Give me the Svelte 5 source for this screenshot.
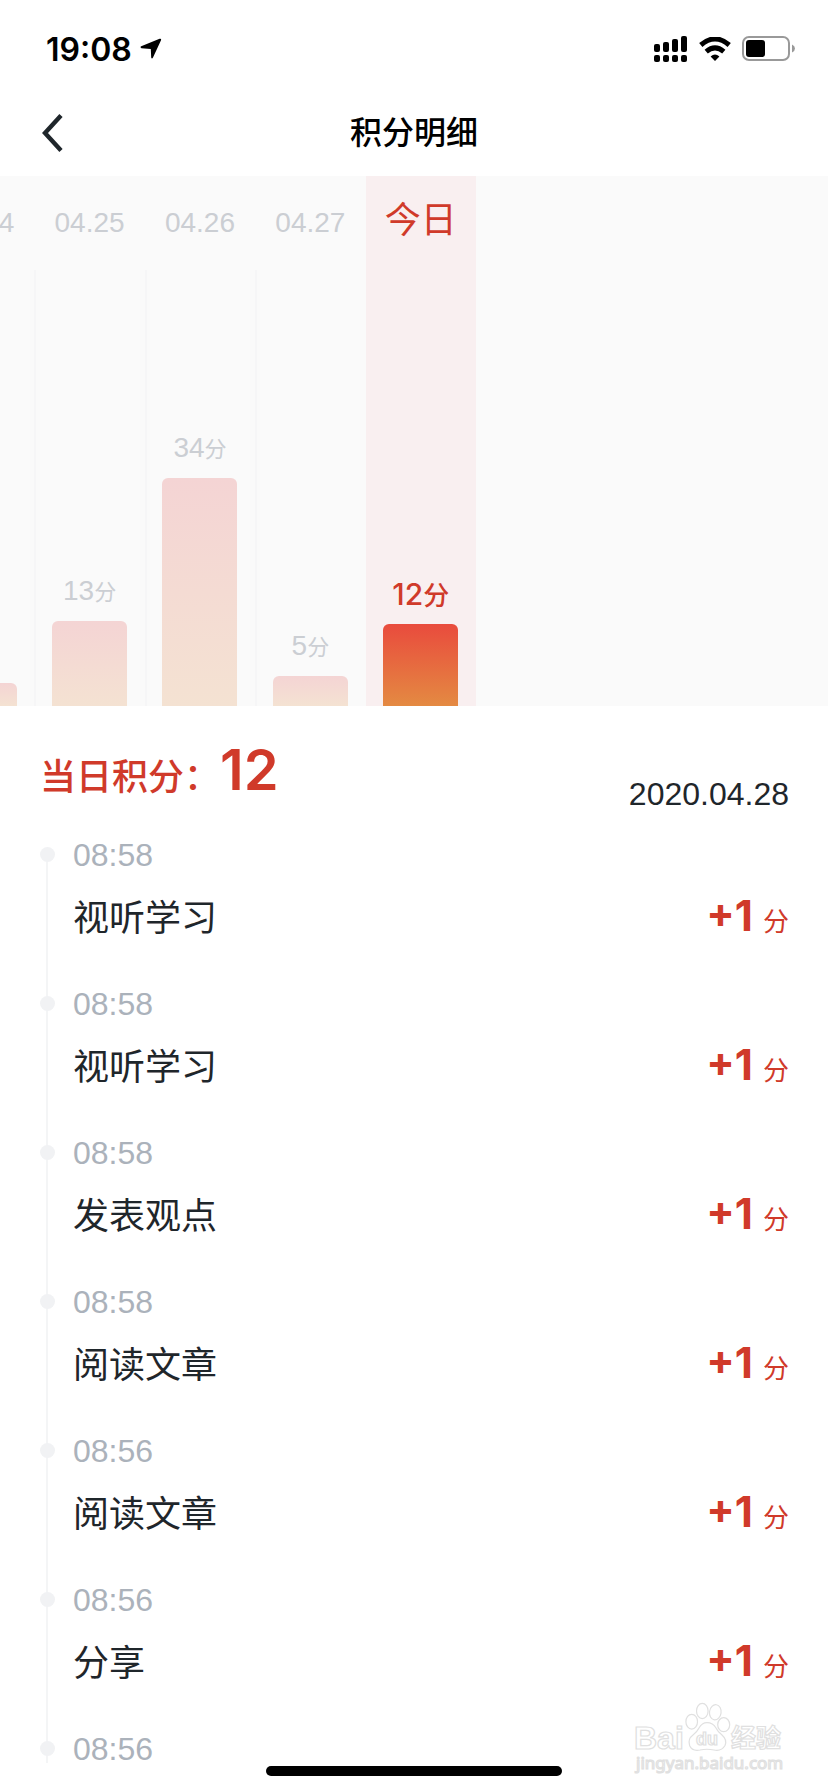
<script>
  let days = [
    { date: '04.24', height: 23 },
    { date: '04.25', score: 13, height: 85 },
    { date: '04.26', score: 34, height: 228 },
    { date: '04.27', score: 5, height: 30 },
    { date: '今日', score: 12, height: 82, today: true }
  ];

  let records = [
    { time: '08:58', name: '视听学习', score: 1 },
    { time: '08:58', name: '视听学习', score: 1 },
    { time: '08:58', name: '发表观点', score: 1 },
    { time: '08:58', name: '阅读文章', score: 1 },
    { time: '08:56', name: '阅读文章', score: 1 },
    { time: '08:56', name: '分享', score: 1 },
    { time: '08:56' }
  ];

  let total = 12;
  let date = '2020.04.28';
</script>

<div class="page">
  <!-- Status bar -->
  <div class="status-bar">
    <div class="clock">
      <span>19:08</span>
      <svg width="22" height="22" viewBox="0 0 22 22">
        <path d="M1.2 8.2 19.6.8Q21.6.2 21 2.2L13 19.6Q11.8 21.4 11.2 19.4L10.8 11 1.4 10.2Q-.4 9 1.2 8.2Z" />
      </svg>
    </div>
    <div class="status-icons">
      <svg width="34" height="26" viewBox="0 0 34 26">
        <rect x="0" y="8" width="6" height="8" rx="2" />
        <rect x="9" y="6" width="6" height="10" rx="2" />
        <rect x="18" y="3" width="6" height="13" rx="2" />
        <rect x="27" y="0" width="6" height="16" rx="2" />
        <rect x="0" y="19" width="6" height="7" rx="2" />
        <rect x="9" y="19" width="6" height="7" rx="2" />
        <rect x="18" y="19" width="6" height="7" rx="2" />
        <rect x="27" y="19" width="6" height="7" rx="2" />
      </svg>
      <svg width="32" height="24" viewBox="0 0 32 24">
        <path d="M1.8 8Q16-4.2 30.2 8" fill="none" stroke="#000" stroke-width="5" />
        <path d="M7.2 14.6Q16 7.2 24.8 14.6" fill="none" stroke="#000" stroke-width="5" />
        <path d="M11.6 19.4Q16 15.8 20.4 19.4L16 24Z" />
      </svg>
      <svg width="54" height="26" viewBox="0 0 54 26">
        <rect x="1" y="1" width="46" height="23" rx="6" fill="none" stroke="#999" stroke-width="2" />
        <rect x="4" y="4" width="19" height="17" rx="3" />
        <path d="M50 8.5Q53 9.8 53 12.5T50 16.5Z" fill="#999" />
      </svg>
    </div>
  </div>

  <!-- Header -->
  <header class="header">
    <button class="back-btn" aria-label="返回">
      <svg width="22" height="38" viewBox="0 0 22 38">
        <path d="M20 1.500 4 19l16 17.500" fill="none" stroke="#1f262b" stroke-width="4.4" />
      </svg>
    </button>
    <h1>积分明细</h1>
  </header>

  <!-- Daily chart -->
  <section class="chart">
    <div class="chart-strip">
      {#each days as day}
        <div class="day" class:today={day.today}>
          <div class="day-date">{day.date}</div>
          <div class="day-body">
            {#if day.score}
              <div class="day-score">{day.score}<small>分</small></div>
            {/if}
            <div class="day-bar" style="height: {day.height}px;"></div>
          </div>
        </div>
      {/each}
    </div>
  </section>

  <!-- Summary -->
  <section class="summary">
    <div class="total">当日积分：<strong>{total}</strong></div>
    <div class="summary-date">{date}</div>
  </section>

  <!-- Records -->
  <ol class="records">
    {#each records as record}
      <li class="record">
        <div class="record-time">{record.time}</div>
        {#if record.name}
          <div class="record-row">
            <span class="record-name">{record.name}</span>
            <span class="record-score"><b>+{record.score}</b><small>分</small></span>
          </div>
        {/if}
      </li>
    {/each}
  </ol>

  <div class="home-indicator"></div>

  <svg class="watermark" width="156" height="80" viewBox="0 0 156 80">
    <g fill="#fff" stroke="#e0e0e0" stroke-width="1.2">
      <text class="wm-bai" x="1" y="49">Bai</text>
      <ellipse cx="58.7" cy="21.7" rx="5.8" ry="7.4" />
      <ellipse cx="69.3" cy="11" rx="5.8" ry="7.6" />
      <ellipse cx="82.3" cy="12.3" rx="5.8" ry="7.6" transform="rotate(8 82.3 12.3)" />
      <ellipse cx="90.7" cy="24.7" rx="6" ry="7" />
      <path d="M74 22.7Q80 22.7 83 28 85 32 89 35 94.500 40 92 45.500 88.500 51.500 81 50 74 48.500 67 50 59 51.500 56.600 45.500 54.500 39 60 35 64 32 66 28 69 22.700 74 22.700Z" />
      <text class="wm-du" x="63" y="45">du</text>
      <text class="wm-cn" x="98" y="47">经验</text>
      <text class="wm-url" x="3" y="69">jingyan.baidu.com</text>
    </g>
  </svg>
</div>

<style>
  :global(body) {
    margin: 0;
    background: #fff;
  }

  .page {
    position: relative;
    display: flex;
    flex-direction: column;
    min-height: 100vh;
    overflow: hidden;
    background: #fff;
    color: #1f262b;
    font-family: 'Liberation Sans', 'Noto Sans CJK SC', sans-serif;
  }

  /* Status bar */
  .status-bar {
    display: flex;
    justify-content: space-between;
    align-items: center;
    height: 98px;
    padding: 0 32px 0 46px;
    color: #000;
  }

  .clock {
    display: flex;
    align-items: center;
    gap: 8px;
    font-family: Inter, sans-serif;
    font-size: 32px;
    font-weight: 600;
  }

  .status-icons {
    display: flex;
    align-items: center;
    gap: 11px;
  }

  /* Header */
  .header {
    position: relative;
    display: flex;
    justify-content: center;
    align-items: center;
    height: 78px;
    padding-bottom: 8px;
    box-sizing: border-box;
  }

  .header h1 {
    margin: 0;
    color: #000;
    font-size: 32px;
    font-weight: 500;
    line-height: 50px;
  }

  .back-btn {
    position: absolute;
    left: 41px;
    display: flex;
    padding: 0;
    border: none;
    background: none;
    cursor: pointer;
  }

  /* Chart */
  .chart {
    height: 530px;
    overflow: hidden;
    background: #fafafa;
  }

  .chart-strip {
    display: flex;
    height: 100%;
    margin-left: -76px;
  }

  .day {
    flex: 0 0 calc(100vw / 7.5);
    display: flex;
    flex-direction: column;
    align-items: stretch;
    color: #cbced3;
    text-align: center;
  }

  .day-date {
    height: 94px;
    font-size: 28px;
    line-height: 94px;
  }

  .day-body {
    flex: 1;
    display: flex;
    flex-direction: column;
    justify-content: flex-end;
    align-items: center;
    border-left: 2px solid #f6f6f7;
    border-right: 2px solid transparent;
  }

  .day-score {
    margin-bottom: 12px;
    font-size: 28px;
    line-height: 32px;
  }

  .day-score small {
    font-size: 22px;
  }

  .day-bar {
    width: 75px;
    border-radius: 6px 6px 0 0;
    background: linear-gradient(#f4d4d4, #f4e2d2);
  }

  .today {
    background: #f9eff0;
    color: #d03a2a;
  }

  .today .day-date {
    font-size: 36px;
    line-height: 90px;
  }

  .today .day-body {
    border-color: transparent;
  }

  .today .day-score {
    font-family: Inter, 'Noto Sans CJK SC', sans-serif;
    font-size: 30px;
    font-weight: 500;
  }

  .today .day-score small {
    font-size: 26px;
  }

  .today .day-bar {
    background: linear-gradient(#e94b3d, #e48a42);
  }

  /* Summary */
  .summary {
    display: flex;
    justify-content: space-between;
    align-items: flex-end;
    height: 104px;
    margin-bottom: 29px;
    padding: 0 39px 0 40px;
  }

  .total {
    color: #d03a2a;
    font-size: 36px;
    font-weight: 500;
    line-height: 64px;
  }

  .total strong {
    font-family: Inter, sans-serif;
    font-size: 56px;
    font-weight: 600;
  }

  .summary-date {
    font-size: 32px;
    line-height: 32px;
  }

  /* Records */
  .records {
    margin: 0;
    padding: 0 39px 0 40px;
    list-style: none;
  }

  .record {
    position: relative;
    height: 149px;
    padding-left: 33px;
  }

  .record:last-child {
    height: 32px;
  }

  /* timeline rail */
  .record::before {
    content: '';
    position: absolute;
    left: 6px;
    top: 16px;
    bottom: -16px;
    width: 2px;
    background: #f4f5f6;
  }

  .record:last-child::before {
    bottom: 2px;
  }

  .record::after {
    content: '';
    position: absolute;
    left: 0;
    top: 8px;
    width: 15px;
    height: 15px;
    border-radius: 50%;
    background: #f1f2f4;
  }

  .record-time {
    color: #abb2bb;
    font-size: 32px;
    line-height: 32px;
  }

  .record-row {
    display: flex;
    justify-content: space-between;
    align-items: center;
    margin-top: 21px;
    line-height: 48px;
  }

  .record-name {
    font-size: 36px;
  }

  .record-score {
    display: flex;
    align-items: baseline;
    gap: 10px;
    color: #d03a2a;
  }

  .record-score b {
    font-family: Inter, sans-serif;
    font-size: 42px;
    font-weight: 700;
  }

  .record-score small {
    font-size: 26px;
  }

  .home-indicator {
    width: 296px;
    height: 10px;
    margin: auto auto 16px;
    border-radius: 5px;
    background: #000;
  }

  .watermark {
    position: absolute;
    right: 39px;
    bottom: 12px;
  }

  .wm-bai {
    font-size: 32px;
    font-weight: 700;
  }

  .wm-du {
    font-size: 18px;
    font-weight: 700;
  }

  .wm-cn {
    font-size: 25px;
    font-weight: 700;
  }

  .wm-url {
    font-family: 'Noto Sans', sans-serif;
    font-size: 17px;
  }
</style>
